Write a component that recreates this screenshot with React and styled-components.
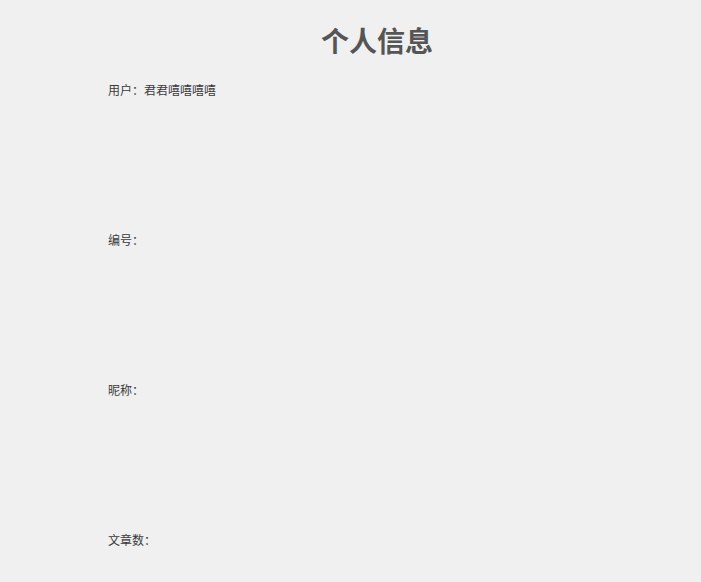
import React from "react";
import styled, { createGlobalStyle } from "styled-components";

const Global = createGlobalStyle`
  html, body { margin: 0; padding: 0; background: #f0f0f0; }
  body { font-family: "Noto Sans CJK SC", "Noto Sans", sans-serif; }
`;

const Page = styled.div`
  width: 538px;
  margin-left: 108px;
  padding-top: 19px;
`;

const Title = styled.h1`
  margin: 0;
  font-size: 28px;
  line-height: 42px;
  font-weight: 700;
  color: #555;
  text-align: center;
`;

const List = styled.div`
  margin-top: 20px;
  display: flex;
  flex-direction: column;
  gap: 132px;
`;

const Row = styled.div`
  font-size: 12px;
  line-height: 18px;
  color: #3a3a3a;
`;

const rows = [
  ["用户", "君君嘻嘻嘻嘻"],
  ["编号", ""],
  ["昵称", ""],
  ["文章数", ""],
];

export default function App() {
  return (
    <>
      <Global />
      <Page>
        <Title>个人信息</Title>
        <List>
          {rows.map(([k, v]) => (
            <Row key={k}>
              {k}：{v}
            </Row>
          ))}
        </List>
      </Page>
    </>
  );
}
